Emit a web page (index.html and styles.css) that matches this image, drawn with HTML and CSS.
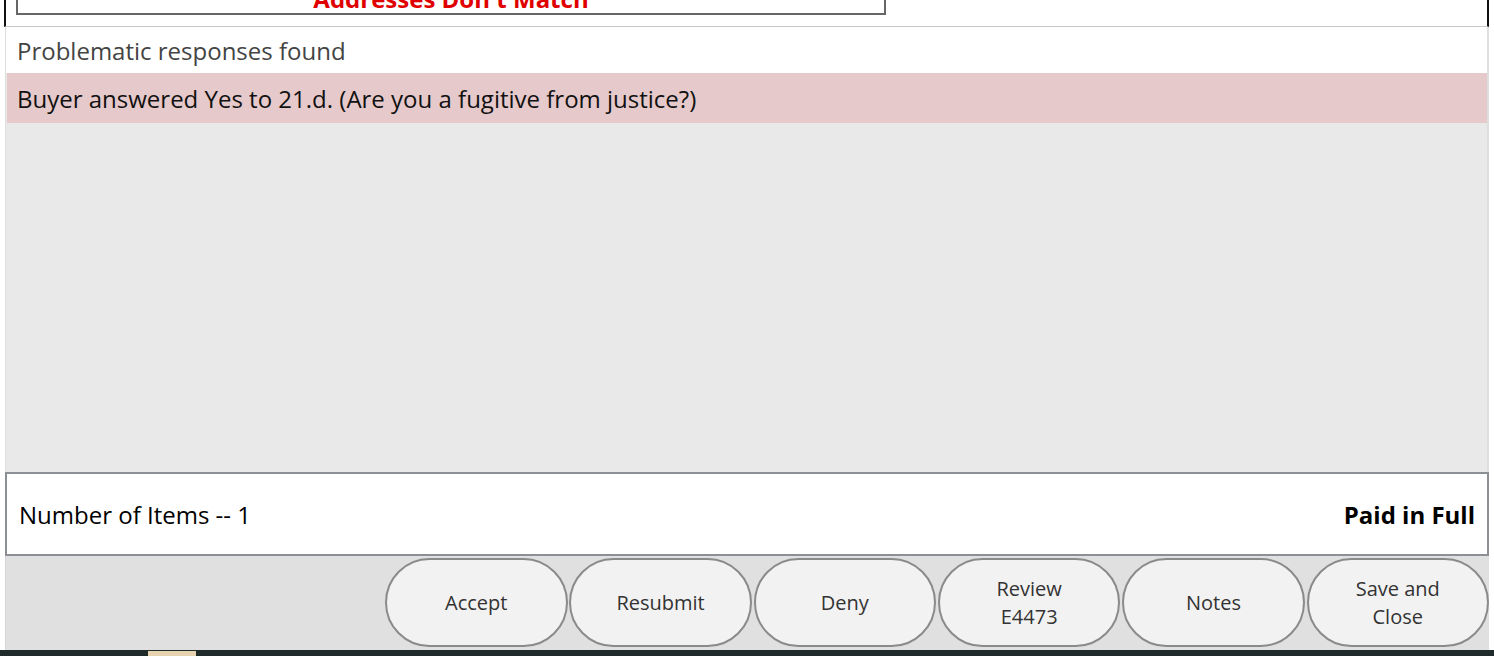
FILE: index.html
```html
<!DOCTYPE html>
<html lang="en">
<head>
    <meta charset="UTF-8">
    <meta name="viewport" content="width=device-width, initial-scale=1.0">
    <title>Transaction Review</title>
    <link rel="stylesheet" href="styles.css">
</head>
<body>
    <div class="page">
        <!-- Alert strip (scrolled up) -->
        <div class="top">
            <div class="alert">
                <span class="alert-text">Addresses Don't Match</span>
            </div>
        </div>

        <!-- Problematic responses -->
        <section class="responses">
            <div class="responses-head">Problematic responses found</div>
            <div class="issue">Buyer answered Yes to 21.d. (Are you a fugitive from justice?)</div>
            <div class="responses-body"></div>
        </section>

        <!-- Summary -->
        <div class="summary">
            <span>Number of Items -- 1</span>
            <span class="status">Paid in Full</span>
        </div>

        <!-- Actions -->
        <div class="actions">
            <button class="pill">Accept</button>
            <button class="pill">Resubmit</button>
            <button class="pill">Deny</button>
            <button class="pill">Review<br>E4473</button>
            <button class="pill">Notes</button>
            <button class="pill">Save and<br>Close</button>
        </div>
    </div>

    <div class="taskbar">
        <span class="taskbar-item"></span>
    </div>
</body>
</html>
```

FILE: styles.css
```css
body {
    font-family: "Open Sans", "Noto Sans", sans-serif;
    background-color: #fff;
    margin: 0;
    padding: 0;
    height: 656px;
    overflow: hidden;
    display: flex;
    flex-direction: column;
}

.page {
    flex: 1;
    display: flex;
    flex-direction: column;
    padding: 0 5px 0 5px;
}

.top {
    height: 26px;
    margin-left: -1px;
    border-left: 2px solid #111;
    border-right: 2px solid #111;
    border-bottom: 1px solid #c8c8c8;
    overflow: hidden;
}

.alert {
    width: 866px;
    height: 13px;
    margin-left: 10px;
    border: 2px solid #666;
    border-top: none;
    display: flex;
    align-items: flex-end;
    justify-content: center;
    overflow: hidden;
}

.alert-text {
    color: #e00000;
    font-weight: bold;
    font-size: 24px;
    line-height: 1;
    margin-bottom: 2px;
}

.responses {
    flex: 1;
    display: flex;
    flex-direction: column;
    border-left: 1px solid #dedede;
    border-right: 2px solid #dedede;
    background: #e9e9e9;
}

.responses-head {
    height: 46px;
    display: flex;
    align-items: center;
    padding-left: 11px;
    background: #fff;
    color: #444;
    font-size: 24px;
}

.issue {
    height: 50px;
    display: flex;
    align-items: center;
    padding-left: 10px;
    margin-left: 1px;
    background: #e6c9ca;
    color: #111;
    font-size: 24px;
}

.responses-body {
    flex: 1;
}

.summary {
    height: 80px;
    display: flex;
    align-items: center;
    justify-content: space-between;
    padding: 0 12px;
    border: 2px solid #8c8f94;
    background: #fff;
    color: #000;
    font-size: 24px;
}

.status {
    font-weight: bold;
}

.actions {
    height: 94px;
    display: flex;
    justify-content: flex-end;
    align-items: flex-start;
    gap: 1.8px;
    padding-top: 2px;
    border-left: 1px solid #d4d4d4;
    background: #e0e0e0;
    box-sizing: border-box;
}

.pill {
    width: 182.5px;
    height: 89px;
    border: 2px solid #8a8a8a;
    border-radius: 45px;
    background: #f2f2f2;
    color: #333;
    font-family: "Open Sans", "Noto Sans", sans-serif;
    font-size: 20px;
    line-height: 28px;
    padding: 0;
    margin: 0;
}

.taskbar {
    height: 6px;
    background: #1f2b2b;
    position: relative;
}

.taskbar-item {
    position: absolute;
    left: 148px;
    top: 1px;
    width: 48px;
    height: 5px;
    background: #e8d3b0;
}
```
